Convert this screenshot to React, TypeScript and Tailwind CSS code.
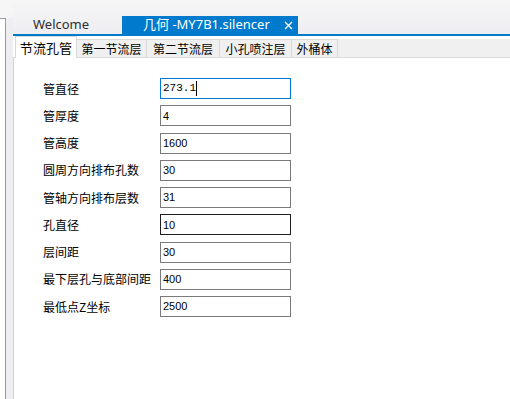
import React from 'react'

const rows = [
  { label: '管直径', value: '273.1', state: 'focus' },
  { label: '管厚度', value: '4' },
  { label: '管高度', value: '1600' },
  { label: '圆周方向排布孔数', value: '30' },
  { label: '管轴方向排布层数', value: '31' },
  { label: '孔直径', value: '10', state: 'hover' },
  { label: '层间距', value: '30' },
  { label: '最下层孔与底部间距', value: '400' },
  { label: '最低点Z坐标', value: '2500' },
]

const tabs = ['第一节流层', '第二节流层', '小孔喷注层', '外桶体']
const tabWidths = ['w-[70px]', 'w-[73px]', 'w-[72px]', 'w-[46px]']

function App() {
  return (
    <div className="w-[510px] h-[399px] flex bg-white overflow-hidden">
      {/* left docked strip */}
      <div className="w-[13px] flex flex-col bg-gradient-to-b from-[#f6f6f6] to-[#eeeef2] via-[#eeeef2]">
        <div className="h-[18px]" />
        <div className="flex-1 flex">
          <div className="w-[6px] bg-white border-t border-r border-[#9a9aa6]" />
          <div className="flex-1 bg-[#eeeef2]" />
        </div>
      </div>

      <div className="flex-1 flex flex-col">
        {/* document tabs */}
        <div className="h-[34px] flex items-end bg-gradient-to-b from-[#f6f6f6] to-[#eeeef2] pl-[7px]">
          <div
            className="w-[102px] h-[18px] flex items-center pl-[13px] text-[13px] text-[#2d2d30]"
            style={{ fontFamily: '"Noto Sans", sans-serif' }}
          >
            Welcome
          </div>
          <div
            className="w-[176px] h-[18px] flex items-center bg-[#007acc] text-white text-[13px] pl-[21px] pr-[5px]"
            style={{ fontFamily: '"Noto Sans", "Noto Sans CJK SC", sans-serif' }}
          >
            <span className="flex-1">几何 -MY7B1.silencer</span>
            <svg width="9" height="9" viewBox="0 0 9 9">
              <path d="M1 1L8 8M8 1L1 8" stroke="white" strokeWidth="1.4" />
            </svg>
          </div>
        </div>
        <div className="h-[2px] bg-[#007acc]" />

        {/* page tabs */}
        <div
          className="h-[22px] flex items-end bg-white text-[12px] text-black"
          style={{ fontFamily: '"Noto Sans CJK SC", sans-serif' }}
        >
          <div className="w-[2px] h-[19px] border-b border-[#d9d9d9]" />
          <div className="w-[62px] h-[22px] flex items-center justify-center bg-white border border-b-0 border-[#d9d9d9] text-[13px]">
            节流孔管
          </div>
          {tabs.map((t, i) => (
            <div
              key={t}
              className={`${tabWidths[i]} h-[19px] flex items-center justify-center bg-[#f0f0f0] border-t border-r border-b border-[#d9d9d9]`}
            >
              {t}
            </div>
          ))}
          <div className="flex-1 h-[19px] bg-[#f0f0f0] border-b border-[#d9d9d9]" />
        </div>

        {/* page content */}
        <div className="flex-1 bg-white border-l border-[#cfcfdc] pl-[29px] pt-[20px]">
          <div className="flex flex-col gap-[6.25px]">
            {rows.map((r) => (
              <div key={r.label} className="flex items-center h-[21px]">
                <div
                  className="w-[117px] text-[12px] text-black"
                  style={{ fontFamily: '"Noto Sans CJK SC", sans-serif' }}
                >
                  {r.label}
                </div>
                <div
                  className={`w-[131px] h-[21px] flex items-center pl-[2px] border bg-white text-[11px] text-black ${
                    r.state === 'focus'
                      ? 'border-[#0078d7]'
                      : r.state === 'hover'
                      ? 'border-[#1e1e1e]'
                      : 'border-[#7a7a7a]'
                  }`}
                  style={{
                    fontFamily:
                      r.state === 'focus' ? '"Liberation Mono", monospace' : '"Liberation Sans", sans-serif',
                  }}
                >
                  {r.value}
                  {r.state === 'focus' && <span className="w-px h-[15px] bg-black" />}
                </div>
              </div>
            ))}
          </div>
        </div>
      </div>
    </div>
  )
}

export default App
